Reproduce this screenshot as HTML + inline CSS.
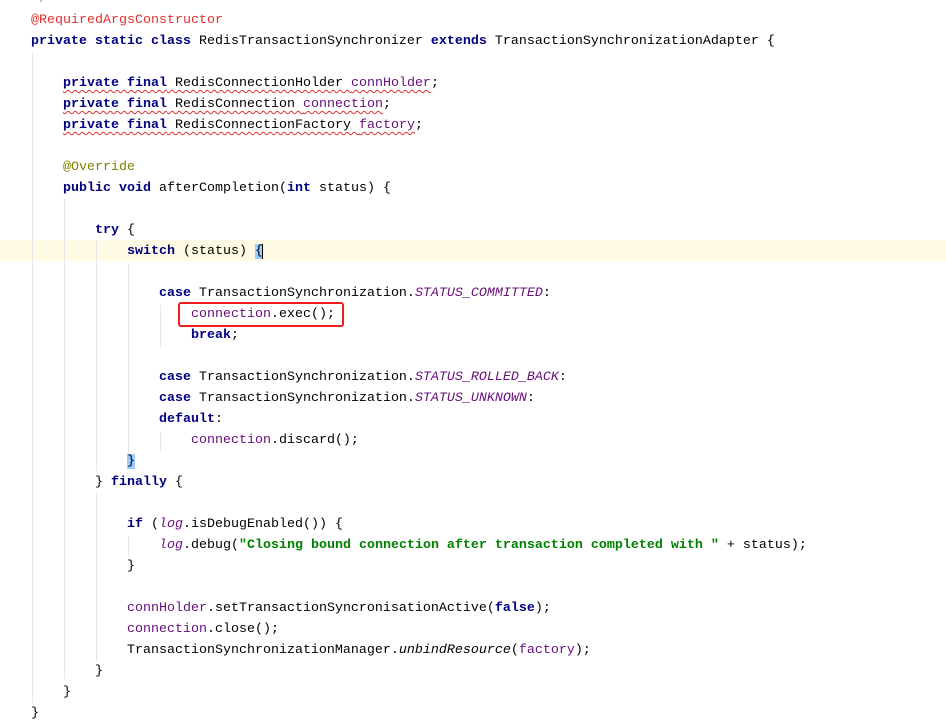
<!DOCTYPE html>
<html><head><meta charset="utf-8"><style>
body{margin:0;width:946px;height:726px;background:#fff;position:relative;overflow:hidden;font-family:"Liberation Mono",monospace;font-size:13.33px;color:#000}
.c{position:absolute;left:0;top:1px;width:946px;height:726px}
.l{position:absolute;left:31px;height:21px;line-height:21px;white-space:pre}
.k{color:#000080;font-weight:bold}
.f{color:#660e7a}
.fi{color:#660e7a;font-style:italic}
.a{color:#808000}
.s{color:#008000;font-weight:bold}
.i{font-style:italic}
.w{text-decoration:underline wavy #e03030;text-decoration-thickness:1px;text-underline-offset:3px}
.g{position:absolute;width:1px;background:#e6e6e6}
.b{background:#99ccff}
</style></head><body>
<div style="position:absolute;left:0;top:240px;width:946px;height:21px;background:#fffae3"></div>
<div class="c">
<div class="g" style="left:32px;top:52px;height:650px"></div>
<div class="g" style="left:64px;top:198px;height:480px"></div>
<div class="g" style="left:96px;top:240px;height:230px"></div>
<div class="g" style="left:96px;top:492px;height:168px"></div>
<div class="g" style="left:128px;top:262px;height:190px"></div>
<div class="g" style="left:160px;top:304px;height:42px"></div>
<div class="g" style="left:160px;top:430px;height:20px"></div>
<div class="g" style="left:128px;top:535px;height:20px"></div>
<div class="l" style="top:-12px;left:39px;color:#999">/</div>
<div class="l" style="top:9px"><span style="color:#e62e2e">@RequiredArgsConstructor</span></div>
<div class="l" style="top:30px"><span class="k">private static class</span> RedisTransactionSynchronizer <span class="k">extends</span> TransactionSynchronizationAdapter {</div>
<div class="l" style="top:72px">    <span class="w"><span class="k">private final</span> RedisConnectionHolder <span class="f">connHolder</span></span>;</div>
<div class="l" style="top:93px">    <span class="w"><span class="k">private final</span> RedisConnection <span class="f">connection</span></span>;</div>
<div class="l" style="top:114px">    <span class="w"><span class="k">private final</span> RedisConnectionFactory <span class="f">factory</span></span>;</div>
<div class="l" style="top:156px">    <span class="a">@Override</span></div>
<div class="l" style="top:177px">    <span class="k">public void</span> afterCompletion(<span class="k">int</span> status) {</div>
<div class="l" style="top:219px">        <span class="k">try</span> {</div>
<div class="l" style="top:240px">            <span class="k">switch</span> (status) <span class="b">{</span><span style="border-left:1px solid #000;margin-left:-1px"></span></div>
<div class="l" style="top:282px">                <span class="k">case</span> TransactionSynchronization.<span class="fi">STATUS_COMMITTED</span>:</div>
<div class="l" style="top:303px">                    <span class="f">connection</span>.exec();</div>
<div class="l" style="top:324px">                    <span class="k">break</span>;</div>
<div class="l" style="top:366px">                <span class="k">case</span> TransactionSynchronization.<span class="fi">STATUS_ROLLED_BACK</span>:</div>
<div class="l" style="top:387px">                <span class="k">case</span> TransactionSynchronization.<span class="fi">STATUS_UNKNOWN</span>:</div>
<div class="l" style="top:408px">                <span class="k">default</span>:</div>
<div class="l" style="top:429px">                    <span class="f">connection</span>.discard();</div>
<div class="l" style="top:450px">            <span class="b">}</span></div>
<div class="l" style="top:471px">        } <span class="k">finally</span> {</div>
<div class="l" style="top:513px">            <span class="k">if</span> (<span class="fi">log</span>.isDebugEnabled()) {</div>
<div class="l" style="top:534px">                <span class="fi">log</span>.debug(<span class="s">"Closing bound connection after transaction completed with "</span> + status);</div>
<div class="l" style="top:555px">            }</div>
<div class="l" style="top:597px">            <span class="f">connHolder</span>.setTransactionSyncronisationActive(<span class="k">false</span>);</div>
<div class="l" style="top:618px">            <span class="f">connection</span>.close();</div>
<div class="l" style="top:639px">            TransactionSynchronizationManager.<span class="i">unbindResource</span>(<span class="f">factory</span>);</div>
<div class="l" style="top:660px">        }</div>
<div class="l" style="top:681px">    }</div>
<div class="l" style="top:702px">}</div>
<div style="position:absolute;left:178px;top:301px;width:162px;height:21px;border:2px solid #f01e1e;border-radius:3px"></div>
</div>
</body></html>
